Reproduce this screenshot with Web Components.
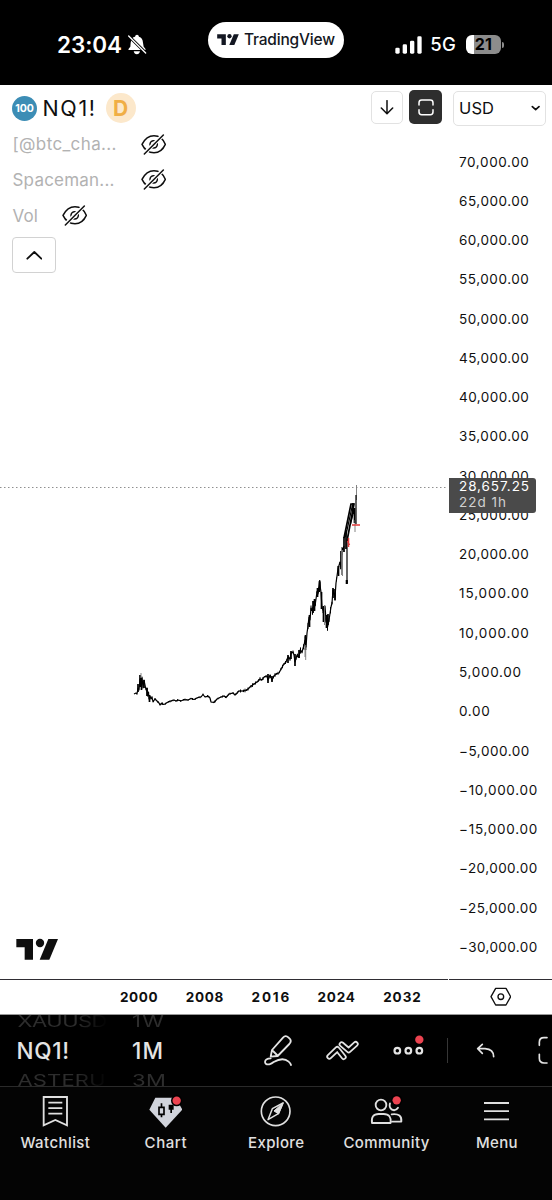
<!DOCTYPE html>
<html lang="en">
<head>
<meta charset="utf-8">
<title>NQ1! chart</title>
<style>
    body {
        margin: 0;
        background: #000;
        font-family: Inter, "Liberation Sans", sans-serif;
    }
</style>
</head>
<body>
<chart-app></chart-app>
<script>
// Text run spread with letter-spacing over a given width.
class FitText extends HTMLElement {
    constructor() {
        super();
        this.attachShadow({mode: 'open'}).innerHTML = `
            <style>
                :host { display: inline-block; white-space: nowrap; line-height: 1.2; flex: none; }
                span { display: inline-block; }
            </style>
            <span><slot></slot></span>
        `;
    }

    connectedCallback() {
        const span = this.shadowRoot.querySelector('span');
        const width = Number(this.getAttribute('w'));
        const spacing = (width - span.getBoundingClientRect().width) / (this.textContent.length - 1);
        span.style.letterSpacing = `${spacing}px`;
        span.style.marginRight = `${-spacing}px`;
    }
}

const LOGO = '<path d="M49 57H99V119H74V82H49Z"/><circle cx="120" cy="69" r="12.5"/><path d="M145 57H174L148 119H119Z"/>';

const ICONS = {
    logo: ['48 56 127 64', `<g fill="currentColor" stroke="none">${LOGO}</g>`],
    bell: ['380 103 60 62', `
        <path fill="currentColor" stroke="none" d="M384 151Q384 146 390 141L391 129Q393 113 404 111Q405 105 410 105Q415 105 416 111Q427 114 428 129L430 141Q436 147 436 151Z"/>
        <path fill="currentColor" stroke="none" d="M400 155H419Q417 164 409.500 164Q402 164 400 155Z"/>
        <path stroke="#000" stroke-width="9" d="M383 107L438 161"/>
        <path stroke-width="4" d="M385 109L436 160"/>`],
    signal: ['359 107 82 54', `
        <g fill="currentColor" stroke="none">
            <rect x="360" y="142" width="13" height="18" rx="4"/>
            <rect x="382" y="132" width="13" height="28" rx="4"/>
            <rect x="404" y="121" width="13" height="39" rx="4"/>
            <rect x="426" y="108" width="13" height="52" rx="4"/>
        </g>`],
    down: ['315 303 42 44', '<path stroke-width="4.500" d="M336 305V343M319 327L336 344L353 327"/>'],
    frame: ['427 299 48 50', '<path stroke-width="4.500" d="M430 317V310Q430 302 438 302H464Q472 302 472 310V317M430 331V338Q430 346 438 346H464Q472 346 472 338V331"/>'],
    caret: ['767 318 28 20', '<path stroke-width="5" d="M771 323L781 332L791 323"/>'],
    eye: ['419 11 76 64', `
        <path stroke-width="4.500" d="M422 42Q435 16 458 16Q482 16 492 42Q481 67 458 67Q434 67 422 42Z"/>
        <circle cx="457" cy="42" r="11" stroke-width="4.500"/>
        <path stroke="#fff" stroke-width="12" d="M428 71L486 13"/>
        <path stroke-width="4.500" d="M429 71L486 14"/>`],
    up: ['78 360 50 30', '<path stroke-width="5.500" d="M82 386L103 366L124 386"/>'],
    gear: ['641 83 64 58', `
        <path stroke-width="4" d="M658 87H689L703 112L689 137H658L644 112Z"/>
        <circle cx="673.500" cy="112" r="8.500" stroke-width="4"/>`],
    pen: ['38 70 90 98', `
        <path stroke-width="5.500" d="M61 138L65 118L98 81Q106 72 114 80L118 84Q125 91 117 100L82 136ZM68 121L80 133"/>
        <path stroke-width="5.500" d="M61 143Q45 143 44 154Q45 163 57 161Q64 159 70 154Q98 138 115 153Q121 158 122 163"/>`],
    pattern: ['226 88 105 62', `
        <path stroke-width="18" d="M239 138L263 115L282 139"/>
        <path stroke="#000" stroke-width="7.500" d="M239 138L263 115L282 139"/>
        <path stroke="#000" stroke-width="21" d="M276 101L297 119L318 100"/>
        <path stroke-width="18" d="M276 101L297 119L318 100"/>
        <path stroke="#000" stroke-width="7.500" d="M276 101L297 119L318 100"/>`],
    more: ['430 74 92 94', `
        <g stroke-width="6.500"><circle cx="443" cy="121" r="8.500"/><circle cx="476" cy="121" r="8.500"/><circle cx="509" cy="121" r="8.500"/></g>
        <circle cx="509" cy="88" r="12.500" fill="#ec4350" stroke="none"/>`],
    undo: ['678 99 58 44', '<path stroke-width="5" d="M697 103L683 116L697 130M683 116H705Q731 118 731 140"/>'],
    expand: ['864 78 42 86', '<path stroke-width="5" d="M891 83H882Q868 83 868 97V106M868 133V145Q868 159 882 159H891"/>'],
    watchlist: ['123 44 80 98', '<path stroke-width="5.500" stroke-linejoin="miter" stroke-linecap="butt" d="M128 50H198V135L163 119L128 135ZM142 67H184M142 83.500H184M142 100H184"/>'],
    chart: ['445 44 100 98', `
        <path fill="#d1d4dc" stroke="none" d="M464 52H525L545 88L495 142L446 88Z"/>
        <path stroke="#000" stroke-width="5" stroke-linecap="butt" stroke-linejoin="miter" d="M475 81H490V102H475ZM482.500 69V81M482.500 102V111"/>
        <path fill="#000" stroke="none" d="M504 73H519V88H514V98H509V88H504Z"/>
        <circle cx="528" cy="61" r="17" fill="#000" stroke="none"/>
        <circle cx="528" cy="61" r="12.500" fill="#ec4350" stroke="none"/>`],
    explore: ['0 0 94 98', `
        <circle cx="47" cy="49" r="43" stroke-width="5"/>
        <path stroke-width="4.500" d="M69 24L37 41L24 74L55 56Z"/>
        <path fill="currentColor" stroke-width="3" d="M69 24L42 48L55 56Z"/>`],
    community: ['284 44 100 98', `
        <circle cx="317" cy="74" r="16" stroke-width="5.500"/>
        <path stroke-width="5.500" d="M290 128Q286 101 310 101H325Q349 101 346 128Z"/>
        <path stroke-width="5.500" d="M344 69Q340 82 350 88Q361 93 368 82M349 102Q381 98 378 124H350"/>
        <circle cx="364" cy="60" r="17" fill="#000" stroke="none"/>
        <circle cx="364" cy="60" r="12.500" fill="#ec4350" stroke="none"/>`],
    menu: ['622 44 82 98', '<path stroke-width="5.500" stroke-linecap="butt" d="M625 68H700M625 92.500H700M625 117H700"/>'],
};

// Icons are drawn on a grid of three units to the pixel.
class AppIcon extends HTMLElement {
    constructor() {
        super();
        this.attachShadow({mode: 'open'});
    }

    connectedCallback() {
        const [box, body] = ICONS[this.getAttribute('name')];
        const [, , w, h] = box.split(' ').map(Number);
        const width = Number(this.getAttribute('width')) || w / 3;
        this.shadowRoot.innerHTML = `
            <style>
                :host { display: block; flex: none; }
                svg { display: block; }
            </style>
            <svg viewBox="${box}" width="${width}" height="${width * h / w}" fill="none" stroke="currentColor"
                stroke-linecap="round" stroke-linejoin="round">${body}</svg>
        `;
    }
}

class StatusBar extends HTMLElement {
    constructor() {
        super();
        this.attachShadow({mode: 'open'}).innerHTML = `
            <style>
                :host {
                    display: grid;
                    grid-template-columns: 208px 136px 1fr;
                    height: 85px;
                    color: #fff;
                    background: #000;
                }
                .time, .radio { display: flex; align-items: center; height: 89px; }
                .time { padding-left: 57px; gap: 5px; font-size: 22.500px; font-weight: 580; }
                .pill {
                    display: flex;
                    align-items: center;
                    justify-content: center;
                    gap: 5px;
                    margin-top: 22px;
                    height: 36px;
                    border-radius: 18px;
                    background: #fff;
                    color: #131722;
                    font-size: 15.500px;
                    font-weight: 500;
                }
                .pill app-icon { margin-top: -1px; }
                .radio { padding-left: 51px; gap: 8px; font-size: 18.500px; font-weight: 500; }
                .battery { display: flex; align-items: center; gap: 1px; margin-left: 2px; }
                .cell {
                    width: 35px;
                    height: 19px;
                    border-radius: 6px;
                    background: linear-gradient(90deg, #fff 8px, #8c8c8c 8px);
                    color: #000;
                    font-size: 16px;
                    font-weight: 700;
                    line-height: 19px;
                    text-align: center;
                }
                .nub { width: 2px; height: 6px; border-radius: 0 3px 3px 0; background: #8c8c8c; }
            </style>
            <div class="time"><fit-text w="65">23:04</fit-text><app-icon name="bell"></app-icon></div>
            <div class="pill"><app-icon name="logo" width="22"></app-icon><fit-text w="91">TradingView</fit-text></div>
            <div class="radio">
                <app-icon name="signal"></app-icon>
                <fit-text w="25.500">5G</fit-text>
                <div class="battery"><div class="cell">21</div><div class="nub"></div></div>
            </div>
        `;
    }
}

class LegendRow extends HTMLElement {
    constructor() {
        super();
        this.attachShadow({mode: 'open'}).innerHTML = `
            <style>
                :host {
                    display: flex;
                    align-items: center;
                    height: 35.700px;
                    color: #b2b2b2;
                    font-size: 17px;
                }
                app-icon { color: #0f0f0f; margin-left: 24px; }
            </style>
            <slot></slot><app-icon name="eye"></app-icon>
        `;
    }
}

// x, y points of the close line, then low/high wicks.
const LINE = '134,694 136,693 137,694 138,688 139,690 140,679 141,686 142,677 143,688 144,680 145,685 146,690 147,688 147.500,696 148.500,692 149,699 150,696 151,699 152,697 153,702 155,699 157,701 159,703 160,705 162,703 163,704.500 165,704 168,702 171,701 174,700 176,701 178,700 181,701 184,699.500 188,700 191,698.500 194,699.500 198,697.500 201,697 203,694.500 205,697 208,696 210,698 211,702 214,702.500 217,699 221,697 224,696 226,697.500 229,694 233,693 235,695 239,691 243,691 247,690 250,687 254,684 257,682 260,679 262,680 264,677 267,676 268,680 270,675 272,680 274,676 276,674 279,673 281,669 284,664 286,662 288,657 290,659 291,653 293,652 294,655 295,662 297,655 299,657 300,650 302,652 304,645 305,640 306,647 307,633 308,626 309,617 310,620 311,608 313,612 314,603 315,606 317,592 318,594 319.500,582 321,592 322,608 324,612 325,606 326,620 327.500,627 329,620 331,607 332,603 333,590 335,597 336,583 338,569 340,562 341,567 342,553 344,546';

const BARS = [
    [138, 684, 692], [140, 675, 687], [141.500, 678, 690], [144, 680, 688], [147, 688, 696], [149.500, 695, 702],
    [268, 674, 683], [272, 676, 682], [288, 655, 663], [291, 651, 659], [295, 654, 666], [299, 650, 658],
    [305.500, 635, 650], [309.500, 615, 627], [313, 601, 613], [314.500, 599, 611], [317.500, 588, 597],
    [319.500, 581, 592], [321.500, 592, 609], [323.500, 606, 622], [326.500, 615, 628], [328, 614, 625],
    [333, 588, 598], [335, 589, 600], [338.500, 566, 576], [341, 551, 569], [344, 537, 552], [346, 530, 549],
    [353, 503, 514], [354.500, 508, 523],
];

class PriceChart extends HTMLElement {
    constructor() {
        super();
        const bars = BARS.map(([x, high, low]) => `M${x} ${high}V${low}`).join('');
        // short candle bodies along the line, every 1.5px
        const points = LINE.split(' ').map(point => point.split(',').map(Number));
        let bodies = '';
        for (let x = 152, i = 0; x < 343; x += 1.5, i++) {
            const next = points.findIndex(point => point[0] > x);
            const [x0, y0] = points[next - 1];
            const [x1, y1] = points[next];
            const y = y0 + (y1 - y0) * (x - x0) / (x1 - x0);
            const reach = (x < 240 ? .7 : x < 300 ? 1.2 : 2.5) * (.5 + (i * 7 % 5) / 4);
            bodies += `M${x} ${(y - reach).toFixed(1)}V${(y + reach).toFixed(1)}`;
        }
        this.attachShadow({mode: 'open'}).innerHTML = `
            <style>
                :host { display: block; }
                svg { display: block; }
            </style>
            <svg viewBox="0 85 449 894" width="449" height="894" fill="none" stroke="#000">
                <path stroke="#8f8f8f" stroke-dasharray="1.500 2.500" stroke-width="1.200" d="M0 487.500H448"/>
                <polyline points="${LINE}" stroke-width="1.200" stroke-linejoin="round"/>
                <path d="${bodies}" stroke-width="1"/>
                <path d="${bars}" stroke-width="1.700"/>
                <path stroke="#777" stroke-width=".9" d="M141 673V678M305.700 645V660M324.500 605V625M341.500 547V575M342.500 550V576M305 648V657M356.500 485V500M355 520V532"/>
                <path stroke-width="1.200" d="M356 495V524M347 541V583M319.700 580V588"/>
                <path stroke-width="2.200" d="M346.800 580V584"/>
                <path stroke-width="1.700" d="M344 538L351 504H354L347 541"/>
                <path stroke-width="1.200" d="M345.500 537L352.500 505M350.500 524L354 510"/>
                <path stroke="#e23b3b" stroke-width="1.500" d="M352 525H360M348.500 538V547M347.500 541L349.500 545"/>
                <g transform="translate(0 920) scale(.33333)" fill="#0f0f0f" stroke="none">${LOGO}</g>
            </svg>
        `;
    }
}

class PriceAxis extends HTMLElement {
    constructor() {
        super();
        let rows = '';
        for (let value = 70000; value >= -30000; value -= 5000) {
            const text = `${value < 0 ? '−' : ''}${Math.abs(value).toLocaleString('en-US')}.00`;
            const width = text.length * 7.820 - (value < 0 ? 0 : .5);
            rows += `<li><fit-text w="${width}">${text}</fit-text></li>`;
        }
        this.attachShadow({mode: 'open'}).innerHTML = `
            <style>
                :host { display: block; position: relative; color: #0f0f0f; }
                .currency {
                    display: flex;
                    align-items: center;
                    justify-content: space-between;
                    box-sizing: border-box;
                    width: 93px;
                    height: 35px;
                    margin: 6px 0 0 4px;
                    padding: 0 5px;
                    border: 1px solid #e2e2e2;
                    border-radius: 5px;
                    font-size: 16.500px;
                }
                ul { list-style: none; margin: 16px 0 0; padding: 0 0 0 10px; font-size: 13.500px; }
                li { display: flex; align-items: center; height: 39.270px; }
                .last {
                    position: absolute;
                    left: 0;
                    top: 392.500px;
                    box-sizing: border-box;
                    width: 87px;
                    height: 35.500px;
                    padding: 0 0 0 10px;
                    border-radius: 0 3px 3px 0;
                    background: #4a4a4a;
                    color: #fff;
                    font-size: 13.500px;
                    line-height: 16px;
                }
                .last fit-text { display: block; line-height: 16.500px; }
                .left { color: #d0d0d0; }
            </style>
            <div class="currency"><fit-text w="35">USD</fit-text><app-icon name="caret"></app-icon></div>
            <ul>${rows}</ul>
            <div class="last">
                <fit-text w="70">28,657.25</fit-text>
                <fit-text class="left" w="47">22d 1h</fit-text>
            </div>
        `;
    }
}

class ChartPane extends HTMLElement {
    constructor() {
        super();
        this.attachShadow({mode: 'open'}).innerHTML = `
            <style>
                :host {
                    display: grid;
                    grid-template-columns: 449px 1fr;
                    grid-template-rows: 894px 35px;
                    height: 930px;
                    box-sizing: border-box;
                    border-bottom: 1px solid #999;
                    background: #fff;
                    color: #0f0f0f;
                    overflow: hidden;
                }
                .plot { position: relative; }
                .legend { position: absolute; top: 5px; left: 12px; right: 7px; }
                .head { display: flex; align-items: center; height: 36.500px; }
                .badge {
                    width: 25px;
                    height: 25px;
                    border-radius: 50%;
                    background: #3c8db5;
                    color: #fff;
                    font-size: 10.500px;
                    font-weight: 700;
                    line-height: 25px;
                    text-align: center;
                }
                .symbol { margin: 1px 10.500px 0 5.500px; font-size: 21.500px; }
                .delay {
                    width: 30px;
                    height: 30px;
                    border-radius: 50%;
                    background: #fce8cb;
                    color: #f0ae45;
                    font-size: 21px;
                    font-weight: 700;
                    line-height: 31px;
                    text-align: center;
                }
                .tool {
                    display: flex;
                    align-items: center;
                    justify-content: center;
                    box-sizing: border-box;
                    width: 32px;
                    height: 33px;
                    margin: 0 6px 2px auto;
                    border: 1px solid #e2e2e2;
                    border-radius: 5px;
                }
                .tool.dark { width: 33px; height: 34px; margin: 0 0 2px; border: 0; background: #2e2e2e; color: #fff; }
                legend-row { padding-left: .5px; }
                .collapse {
                    display: flex;
                    align-items: center;
                    justify-content: center;
                    box-sizing: border-box;
                    width: 44px;
                    height: 36px;
                    margin-top: 3px;
                    border: 1px solid #d2d2d2;
                    border-radius: 4px;
                }
                .times, .corner { box-sizing: border-box; border-top: 1.500px solid #2f2d33; display: flex; align-items: center; }
                .times { margin-right: 1px; padding-left: 120px; gap: 28.200px; font-size: 13.500px; font-weight: 650; }
                .corner { padding-left: 41px; }
            </style>
            <div class="plot">
                <price-chart></price-chart>
                <div class="legend">
                    <div class="head">
                        <div class="badge">100</div>
                        <fit-text class="symbol" w="52.500">NQ1!</fit-text>
                        <div class="delay">D</div>
                        <div class="tool"><app-icon name="down"></app-icon></div>
                        <div class="tool dark"><app-icon name="frame"></app-icon></div>
                    </div>
                    <legend-row><fit-text w="104">[@btc_cha...</fit-text></legend-row>
                    <legend-row><fit-text w="102" style="padding-right: 2px">Spaceman...</fit-text></legend-row>
                    <legend-row><fit-text w="25.500">Vol</fit-text></legend-row>
                    <div class="collapse"><app-icon name="up"></app-icon></div>
                </div>
            </div>
            <price-axis></price-axis>
            <div class="times">
                <fit-text w="37.600">2000</fit-text><fit-text w="37.600">2008</fit-text><fit-text w="37.600">2016</fit-text><fit-text w="37.600">2024</fit-text><fit-text w="37.600">2032</fit-text>
            </div>
            <div class="corner"><app-icon name="gear"></app-icon></div>
        `;
    }
}

class ChartToolbar extends HTMLElement {
    constructor() {
        super();
        this.attachShadow({mode: 'open'}).innerHTML = `
            <style>
                :host {
                    display: grid;
                    grid-template-columns: 132px 115px 61px 69px 63px 15px 61px 21px 15px;
                    grid-template-rows: 71px;
                    align-items: center;
                    justify-items: center;
                    height: 71px;
                    background: #000;
                    color: #e4e4e4;
                    overflow: hidden;
                }
                .wheel {
                    display: flex;
                    flex-direction: column;
                    justify-self: start;
                    padding-left: 16.500px;
                    font-size: 22.500px;
                    font-weight: 450;
                }
                .wheel.interval { padding-left: 0; }
                .wheel > div { display: flex; align-items: center; height: 29.500px; }
                .side {
                    color: #2d2d2d;
                    font-size: 22px;
                    font-weight: 400;
                    transform: scaleY(.7);
                    transform-origin: center;
                }
                .symbols .side { padding-left: 1px; -webkit-mask-image: linear-gradient(90deg, #000 65%, transparent); }
                .line { width: 1px; height: 25px; background: #363636; }
                .cut { grid-column: span 2; justify-self: end; }
            </style>
            <div class="wheel symbols">
                <div class="side"><fit-text w="90">XAUUSD</fit-text></div>
                <div><fit-text w="52.500">NQ1!</fit-text></div>
                <div class="side"><fit-text w="88">ASTERU</fit-text></div>
            </div>
            <div class="wheel interval">
                <div class="side"><fit-text w="32">1W</fit-text></div>
                <div><fit-text w="31">1M</fit-text></div>
                <div class="side"><fit-text w="34">3M</fit-text></div>
            </div>
            <app-icon name="pen"></app-icon>
            <app-icon name="pattern"></app-icon>
            <app-icon name="more"></app-icon>
            <div class="line"></div>
            <app-icon name="undo"></app-icon>
            <app-icon class="cut" name="expand"></app-icon>
        `;
    }
}

class TabItem extends HTMLElement {
    constructor() {
        super();
        this.attachShadow({mode: 'open'});
    }

    connectedCallback() {
        this.shadowRoot.innerHTML = `
            <style>
                :host {
                    display: flex;
                    flex: 1 1 0;
                    flex-direction: column;
                    align-items: center;
                    gap: 6px;
                    padding-top: 8px;
                    font-size: 15px;
                    font-weight: 500;
                }
            </style>
            <app-icon name="${this.getAttribute('icon')}"></app-icon>
            <slot></slot>
        `;
    }
}

class TabBar extends HTMLElement {
    constructor() {
        super();
        this.attachShadow({mode: 'open'}).innerHTML = `
            <style>
                :host {
                    display: flex;
                    box-sizing: border-box;
                    height: 114px;
                    border-top: 1px solid #2a2a2a;
                    background: #040404;
                    color: #e0e0e0;
                }
                tab-item:first-child { margin-left: -1px; }
            </style>
            <tab-item icon="watchlist"><fit-text w="69.500">Watchlist</fit-text></tab-item>
            <tab-item icon="chart"><fit-text w="42">Chart</fit-text></tab-item>
            <tab-item icon="explore"><fit-text w="56">Explore</fit-text></tab-item>
            <tab-item icon="community"><fit-text w="86">Community</fit-text></tab-item>
            <tab-item icon="menu"><fit-text w="41.500">Menu</fit-text></tab-item>
        `;
    }
}

class ChartApp extends HTMLElement {
    constructor() {
        super();
        this.attachShadow({mode: 'open'}).innerHTML = `
            <style>
                :host { display: flex; flex-direction: column; width: 552px; height: 1200px; overflow: hidden; }
            </style>
            <status-bar></status-bar>
            <chart-pane></chart-pane>
            <chart-toolbar></chart-toolbar>
            <tab-bar></tab-bar>
        `;
    }
}

customElements.define('fit-text', FitText);
customElements.define('app-icon', AppIcon);
customElements.define('status-bar', StatusBar);
customElements.define('legend-row', LegendRow);
customElements.define('price-chart', PriceChart);
customElements.define('price-axis', PriceAxis);
customElements.define('chart-pane', ChartPane);
customElements.define('chart-toolbar', ChartToolbar);
customElements.define('tab-item', TabItem);
customElements.define('tab-bar', TabBar);
customElements.define('chart-app', ChartApp);
</script>
</body>
</html>
